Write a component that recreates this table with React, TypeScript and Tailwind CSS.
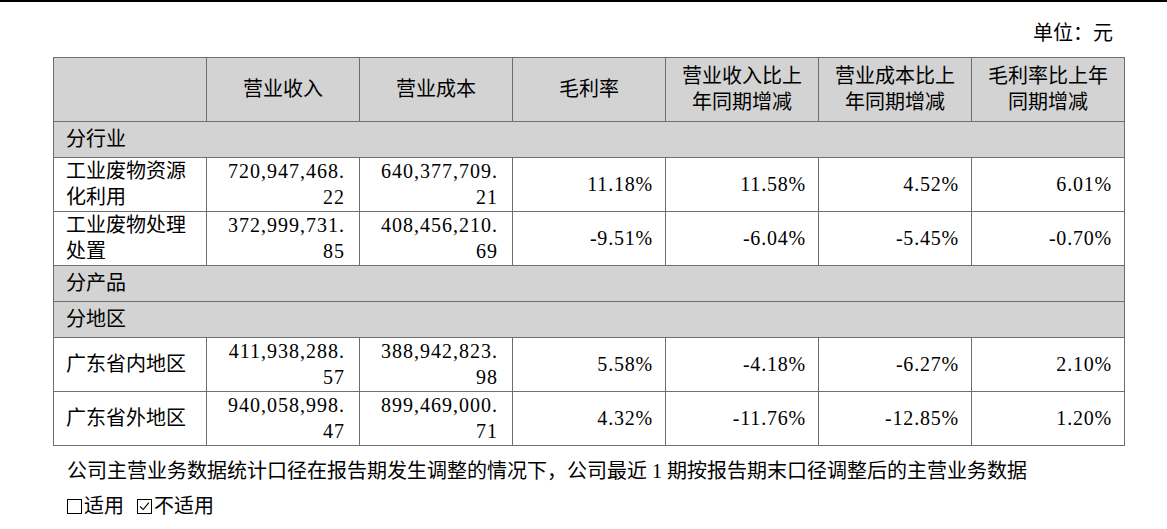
const header = [
  [""],
  ["营业收入"],
  ["营业成本"],
  ["毛利率"],
  ["营业收入比上", "年同期增减"],
  ["营业成本比上", "年同期增减"],
  ["毛利率比上年", "同期增减"],
];

type DataRow = {
  label: string[];
  revenue: [string, string];
  cost: [string, string];
  pct: string[];
};

const industry: DataRow[] = [
  {
    label: ["工业废物资源", "化利用"],
    revenue: ["720,947,468.", "22"],
    cost: ["640,377,709.", "21"],
    pct: ["11.18%", "11.58%", "4.52%", "6.01%"],
  },
  {
    label: ["工业废物处理", "处置"],
    revenue: ["372,999,731.", "85"],
    cost: ["408,456,210.", "69"],
    pct: ["-9.51%", "-6.04%", "-5.45%", "-0.70%"],
  },
];

const regions: DataRow[] = [
  {
    label: ["广东省内地区"],
    revenue: ["411,938,288.", "57"],
    cost: ["388,942,823.", "98"],
    pct: ["5.58%", "-4.18%", "-6.27%", "2.10%"],
  },
  {
    label: ["广东省外地区"],
    revenue: ["940,058,998.", "47"],
    cost: ["899,469,000.", "71"],
    pct: ["4.32%", "-11.76%", "-12.85%", "1.20%"],
  },
];

function Lines({ lines }: { lines: string[] }) {
  return (
    <>
      {lines.map((l, i) => (
        <span key={i} className="block">
          {l}
        </span>
      ))}
    </>
  );
}

function SectionRow({ title }: { title: string }) {
  return (
    <tr className="h-[36px] bg-[#d3d3d3]">
      <td colSpan={7} className="border-[1.5px] border-[#6e6e6e] py-0 pl-3 text-left">
        {title}
      </td>
    </tr>
  );
}

function Row({ row }: { row: DataRow }) {
  return (
    <tr className="h-[54px] leading-[26px]">
      <td className="border-[1.5px] border-[#6e6e6e] py-0 pl-3 text-left">
        <Lines lines={row.label} />
      </td>
      <td className="border-[1.5px] border-[#6e6e6e] py-0 pr-[14px] text-right tracking-[1px]">
        <Lines lines={row.revenue} />
      </td>
      <td className="border-[1.5px] border-[#6e6e6e] py-0 pr-[14px] text-right tracking-[1px]">
        <Lines lines={row.cost} />
      </td>
      {row.pct.map((p, i) => (
        <td key={i} className="border-[1.5px] border-[#6e6e6e] py-0 pr-3 text-right tracking-[0.8px]">
          {p}
        </td>
      ))}
    </tr>
  );
}

function Box({ checked }: { checked?: boolean }) {
  return (
    <span className="mr-[2px] inline-flex h-[15px] w-[15px] items-center justify-center border border-black">
      {checked && (
        <svg viewBox="0 0 15 15" className="h-[13px] w-[13px]" fill="none" stroke="black" strokeWidth="1.3">
          <path d="M2.5 7.5 L6 11 L12.5 3" />
        </svg>
      )}
    </span>
  );
}

export default function App() {
  return (
    <div className="relative h-[529px] w-[1167px] overflow-hidden bg-white font-['Liberation_Serif','Noto_Sans_CJK_SC',serif] text-[20px] leading-[27px] text-black">
      <div className="h-[1.5px] w-full bg-black" />

      <div className="mt-[18px] pr-[54px] text-right">单位：元</div>

      <table className="ml-[53px] mt-[10px] w-[1071px] table-fixed border-collapse">
        <colgroup>
          {header.map((_, i) => (
            <col key={i} className="w-[153px]" />
          ))}
        </colgroup>
        <tbody>
          <tr className="h-[64px] bg-[#d3d3d3] leading-[26px]">
            {header.map((h, i) => (
              <td key={i} className="border-[1.5px] border-[#6e6e6e] py-0 text-center">
                <Lines lines={h} />
              </td>
            ))}
          </tr>
          <SectionRow title="分行业" />
          {industry.map((r, i) => (
            <Row key={i} row={r} />
          ))}
          <SectionRow title="分产品" />
          <SectionRow title="分地区" />
          {regions.map((r, i) => (
            <Row key={i} row={r} />
          ))}
        </tbody>
      </table>

      <div className="ml-[67px] mt-[12px]">
        公司主营业务数据统计口径在报告期发生调整的情况下，公司最近 1 期按报告期末口径调整后的主营业务数据
      </div>
      <div className="ml-[67px] mt-[8px] flex items-center">
        <Box />
        <span>适用</span>
        <span className="ml-[13px] flex items-center">
          <Box checked />
          <span>不适用</span>
        </span>
      </div>
    </div>
  );
}
